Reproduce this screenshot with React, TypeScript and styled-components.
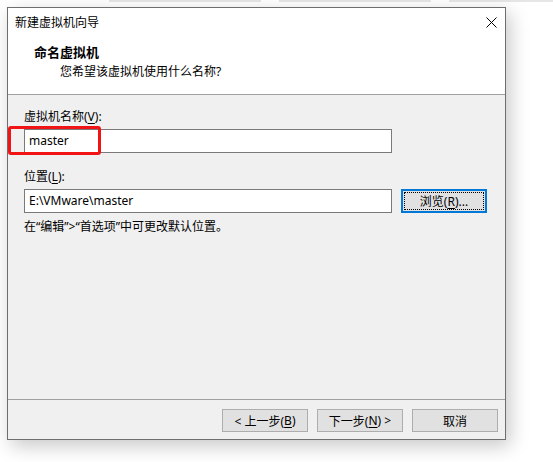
import React from "react";
import styled, { createGlobalStyle } from "styled-components";

const Global = createGlobalStyle`
  html, body { margin: 0; padding: 0; background: #ffffff; }
  body {
    font-family: "Segoe UI", "Noto Sans", "Noto Sans CJK SC", sans-serif;
    font-size: 12px;
    color: #000;
    width: 553px;
    height: 462px;
    overflow: hidden;
  }
  u { text-decoration: underline; text-underline-offset: 2px; }
`;

const Page = styled.div`
  display: flex;
  flex-direction: column;
  width: 553px;
  height: 462px;
`;

const TopStrip = styled.div`
  display: flex;
  gap: 18px;
  height: 2px;
  padding-left: 109px;
`;

const StripSeg = styled.div<{ $w: number }>`
  width: ${(p) => p.$w}px;
  height: 2px;
  background: #e6e6e6;
`;

const Window = styled.div`
  margin: 5px 0 0 7px;
  width: 499px;
  height: 433px;
  box-sizing: border-box;
  border: 1px solid #6e6e6e;
  background: #f0f0f0;
  box-shadow: 4px 6px 18px rgba(0, 0, 0, 0.22);
  display: flex;
  flex-direction: column;
`;

const Header = styled.div`
  background: #fff;
  height: 86px;
  border-bottom: 1px solid #a0a0a0;
  display: flex;
  flex-direction: column;
`;

const TitleBar = styled.div`
  height: 29px;
  display: flex;
  align-items: center;
  padding-left: 7px;
`;

const TitleText = styled.div`
  flex: 1;
  font-size: 12px;
  line-height: 16px;
`;

const CloseBox = styled.div`
  width: 28px;
  height: 29px;
  display: flex;
  align-items: center;
  justify-content: center;
`;

const Heading = styled.div`
  margin: 7px 0 0 26px;
  font-weight: bold;
  font-size: 13px;
  line-height: 17px;
`;

const SubHeading = styled.div`
  margin: 3px 0 0 52px;
  font-size: 12px;
  line-height: 16px;
`;

const Content = styled.div`
  position: relative;
  flex: 1;
  padding: 14px 0 0 16px;
  display: flex;
  flex-direction: column;
`;

const Label = styled.div<{ $mt?: number }>`
  margin-top: ${(p) => p.$mt ?? 0}px;
  line-height: 16px;
  font-size: 12px;
`;

const Row = styled.div`
  display: flex;
  align-items: center;
  gap: 9px;
  margin-top: 4px;
`;

const TextBox = styled.div`
  width: 368px;
  height: 24px;
  box-sizing: border-box;
  border: 1px solid #7a7a7a;
  background: #fff;
  display: flex;
  align-items: center;
  padding: 0 0 2px 4px;
  font-size: 12px;
`;

const Hint = styled.div`
  margin-top: 6px;
  line-height: 16px;
  font-size: 12px;
`;

const Highlight = styled.div`
  position: absolute;
  left: 0;
  top: 31px;
  width: 93px;
  height: 29px;
  box-sizing: border-box;
  border: 3px solid #f01414;
  border-radius: 3px;
  pointer-events: none;
`;

const Button = styled.div<{ $focused?: boolean }>`
  width: 86px;
  height: ${(p) => (p.$focused ? 24 : 23)}px;
  box-sizing: border-box;
  background: #e1e1e1;
  border: ${(p) => (p.$focused ? "2px solid #0078d7" : "1px solid #adadad")};
  display: flex;
  align-items: center;
  justify-content: center;
  font-size: 12px;
  position: relative;
  ${(p) =>
    p.$focused
      ? `&::after { content: ""; position: absolute; inset: 1px; border: 1px dotted #000; }`
      : ""}
`;

const Footer = styled.div`
  border-top: 1px solid #a0a0a0;
  display: flex;
  justify-content: flex-end;
  align-items: flex-start;
  gap: 9px;
  padding: 9px 7px 0 0;
  box-sizing: border-box;
  height: 40px;
`;

export default function App() {
  return (
    <>
      <Global />
      <Page>
        <TopStrip>
          <StripSeg $w={152} />
          <StripSeg $w={152} />
          <StripSeg $w={104} />
        </TopStrip>
        <Window>
          <Header>
            <TitleBar>
              <TitleText>新建虚拟机向导</TitleText>
              <CloseBox>
                <svg width="11" height="11" viewBox="0 0 11 11">
                  <path d="M0.5 0.5 L10.5 10.5 M10.5 0.5 L0.5 10.5" stroke="#000" strokeWidth="1" />
                </svg>
              </CloseBox>
            </TitleBar>
            <Heading>命名虚拟机</Heading>
            <SubHeading>您希望该虚拟机使用什么名称?</SubHeading>
          </Header>
          <Content>
            <Label>
              虚拟机名称(<u>V</u>):
            </Label>
            <Row>
              <TextBox>master</TextBox>
            </Row>
            <Label $mt={16}>
              位置(<u>L</u>):
            </Label>
            <Row>
              <TextBox>E:\VMware\master</TextBox>
              <Button $focused>
                浏览(<u>R</u>)...
              </Button>
            </Row>
            <Hint>在“编辑”&gt;“首选项”中可更改默认位置。</Hint>
            <Highlight />
          </Content>
          <Footer>
            <Button>
              &lt; 上一步(<u>B</u>)
            </Button>
            <Button>
              下一步(<u>N</u>) &gt;
            </Button>
            <Button>取消</Button>
          </Footer>
        </Window>
      </Page>
    </>
  );
}
